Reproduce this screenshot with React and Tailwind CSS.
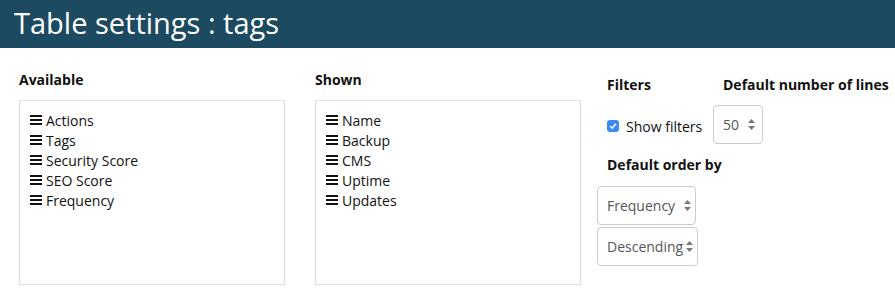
import React from 'react';

const available = ['Actions', 'Tags', 'Security Score', 'SEO Score', 'Frequency'];
const shown = ['Name', 'Backup', 'CMS', 'Uptime', 'Updates'];

// Icône "bars" devant chaque colonne
const Bars = () => (
    <svg width="12" height="10" viewBox="0 0 12 10" className="shrink-0 mr-[4px]">
        <rect x="0" y="0" width="12" height="2" fill="#111" />
        <rect x="0" y="4" width="12" height="2" fill="#111" />
        <rect x="0" y="8" width="12" height="2" fill="#111" />
    </svg>
);

const Arrows = () => (
    <svg width="7" height="11" viewBox="0 0 7 11" className="shrink-0">
        <path d="M3.5 0 L7 4 L0 4 Z" fill="#777" />
        <path d="M0 7 L7 7 L3.5 11 Z" fill="#777" />
    </svg>
);

const FakeSelect = ({ value, className = '' }) => (
    <div className={`flex items-center justify-between h-[39px] border border-[#ccc] rounded-[4px] bg-white pl-[9px] pr-[4px] text-[14px] text-[#555] ${className}`}>
        <span>{value}</span>
        <Arrows />
    </div>
);

const ColumnList = ({ title, items, className = '' }) => (
    <div className={`w-[266px] ${className}`}>
        <div className="font-bold text-[14px] leading-[20px] text-[#111]">{title}</div>
        <div className="mt-[10px] h-[185px] border border-[#ddd] pt-[9px] pl-[10px]">
            {items.map((item) => (
                <div key={item} className="flex items-center h-[20px] text-[14px] text-[#111]">
                    <Bars />
                    <span>{item}</span>
                </div>
            ))}
        </div>
    </div>
);

const App = () => {
    return (
        <div className="w-[895px] h-[289px] bg-white overflow-hidden" style={{ fontFamily: '"Open Sans", "Noto Sans", sans-serif' }}>
            <header className="h-[48px] bg-[#1c4a61] pl-[14px] flex items-center">
                <h1 className="text-white text-[29px] leading-[48px] -mt-[2px]">Table settings : tags</h1>
            </header>

            <main className="flex pl-[19px] pt-[22px]">
                <ColumnList title="Available" items={available} />
                <ColumnList title="Shown" items={shown} className="ml-[30px]" />

                <div className="ml-[15px] pt-[5px]">
                    <div className="flex">
                        <div className="w-[127px] pl-[11px]">
                            <div className="font-bold text-[14px] leading-[20px] text-[#111]">Filters</div>
                            <div className="mt-[10px] h-[39px] pt-[3px] flex items-center">
                                <span className="w-[12px] h-[12px] rounded-[3px] bg-[#3b8cf2] flex items-center justify-center mr-[7px]">
                                    <svg width="8" height="8" viewBox="0 0 8 8">
                                        <path d="M1.2 4.2 L3.2 6.2 L6.8 1.8" stroke="white" strokeWidth="1.5" fill="none" />
                                    </svg>
                                </span>
                                <span className="text-[14px] text-[#111]">Show filters</span>
                            </div>
                        </div>
                        <div>
                            <div className="font-bold text-[14px] leading-[20px] text-[#111] whitespace-nowrap">Default number of lines</div>
                            <FakeSelect value="50" className="mt-[10px] -ml-[10px] w-[50px] pr-[7px]" />
                        </div>
                    </div>

                    <div className="pl-[11px] mt-[11px] font-bold text-[14px] leading-[20px] text-[#111]">Default order by</div>
                    <FakeSelect value="Frequency" className="mt-[11px] ml-[1px] w-[99px] pr-[4px]" />
                    <FakeSelect value="Descending" className="mt-[2px] ml-[1px] w-[101px] pr-[3px]" />
                </div>
            </main>
        </div>
    );
};

export default App;
